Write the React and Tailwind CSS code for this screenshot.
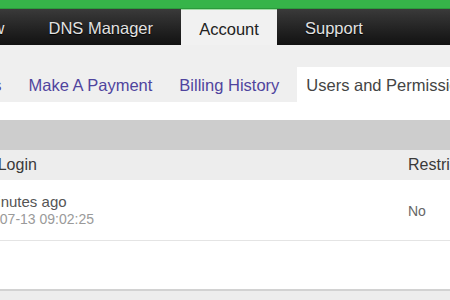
import React from 'react';

const navTabs = [
  { label: 'View', active: false },
  { label: 'DNS Manager', active: false },
  { label: 'Account', active: true },
  { label: 'Support', active: false },
];

const subTabs = [
  { label: 'Invoices', active: false },
  { label: 'Make A Payment', active: false },
  { label: 'Billing History', active: false },
  { label: 'Users and Permissions', active: true },
];

const App = () => {
  return (
    <div className="w-[450px] h-[300px] overflow-hidden bg-[#ededed] font-['Liberation_Sans',Arial,sans-serif]">
      {/* top green strip */}
      <div className="h-[9px] bg-[#36b449] border-b border-[#2c9a3c]" />

      {/* main nav */}
      <div className="h-[36px] bg-gradient-to-b from-[#3a3a3a] to-[#121212] flex items-stretch">
        <div className="flex items-stretch gap-[12px] ml-[-47px] shrink-0">
          {navTabs.map((t) => (
            <div
              key={t.label}
              className={
                t.active
                  ? 'w-[96px] pt-[3px] flex items-center justify-center text-[16.5px] text-[#222] bg-[#f1f1f1] border-t border-[#a6dca8] whitespace-nowrap'
                  : 'px-[16px] pt-[3px] flex items-center text-[16.5px] text-[#e2e2e2] [text-shadow:0_1px_1px_#000] whitespace-nowrap'
              }
            >
              {t.label}
            </div>
          ))}
        </div>
      </div>

      {/* sub nav */}
      <div className="h-[57px] bg-[#efefef] flex items-end">
        <div className="flex items-stretch gap-[9px] ml-[-68px] shrink-0">
          {subTabs.map((t) => (
            <div
              key={t.label}
              className={
                t.active
                  ? 'h-[35px] px-[9px] pt-[1px] flex items-center text-[16.5px] text-[#444] bg-white whitespace-nowrap'
                  : 'h-[35px] px-[9px] pt-[1px] flex items-center text-[16.5px] text-[#4f449e] whitespace-nowrap'
              }
            >
              {t.label}
            </div>
          ))}
        </div>
      </div>

      {/* content panel */}
      <div className="bg-white pt-[18px] border-b-2 border-[#d2d2d2]">
        <div className="h-[30px] bg-[#cdcdcd]" />
        <div className="h-[30px] bg-[#ededed] flex items-center text-[16px] text-[#3a3a3a] whitespace-nowrap">
          <div className="ml-[-37px] w-[445px] shrink-0">Last Login</div>
          <div className="shrink-0">Restrictions</div>
        </div>
        <div className="h-[61px] border-b border-[#e4e4e4] flex items-center whitespace-nowrap">
          <div className="ml-[-36px] w-[444px] shrink-0 flex flex-col">
            <span className="text-[15px] leading-[18px] text-[#555]">12 minutes ago</span>
            <span className="text-[14px] leading-[17px] text-[#9a9a9a]">2015-07-13 09:02:25</span>
          </div>
          <div className="shrink-0 text-[14px] text-[#666] pt-[2px]">No</div>
        </div>
        <div className="h-[48px]" />
      </div>
    </div>
  );
};

export default App;
